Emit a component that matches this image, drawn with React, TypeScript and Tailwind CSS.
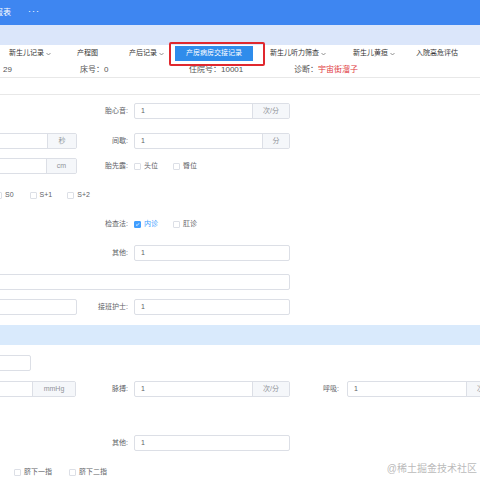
import React from 'react';

const FONT = "font-['Liberation_Sans','Noto_Sans_CJK_SC',sans-serif]";

function Chevron() {
  return (
    <svg width="5" height="4" viewBox="0 0 5 4" className="ml-[2px]">
      <path d="M0.5 1 L2.5 3 L4.5 1" fill="none" stroke="#666" strokeWidth="0.7" />
    </svg>
  );
}

function Box({ checked = false }: { checked?: boolean }) {
  return (
    <span
      className={`w-[7px] h-[7px] shrink-0 rounded-[1px] border flex items-center justify-center ${
        checked ? 'bg-[#409eff] border-[#409eff]' : 'bg-white border-[#dcdfe6]'
      }`}
    >
      {checked && (
        <svg width="5" height="5" viewBox="0 0 5 5">
          <path d="M1 2.6 L2.1 3.6 L4 1.3" fill="none" stroke="#fff" strokeWidth="0.8" />
        </svg>
      )}
    </span>
  );
}

function Option({ text, checked = false, gap = 'mr-[15px]' }: { text: string; checked?: boolean; gap?: string }) {
  return (
    <span className={`flex items-center gap-[3px] ${gap}`}>
      <Box checked={checked} />
      <span className={`text-[7px] ${checked ? 'text-[#409eff]' : 'text-[#606266]'}`}>{text}</span>
    </span>
  );
}

function Field({
  value = '',
  addon,
  addonW = '',
  className = '',
}: {
  value?: string;
  addon?: string;
  addonW?: string;
  className?: string;
}) {
  return (
    <div className={`h-[16px] flex border border-[#dcdfe6] rounded-[2px] bg-white overflow-hidden ${className}`}>
      <div className="flex-1 flex items-center pl-[6px] text-[7px] text-[#606266]">{value}</div>
      {addon && (
        <div
          className={`${addonW} bg-[#f5f7fa] border-l border-[#dcdfe6] flex items-center justify-center text-[7px] text-[#909399]`}
        >
          {addon}
        </div>
      )}
    </div>
  );
}

function Label2({ text }: { text: string }) {
  return <div className="w-[50px] text-right text-[7px] text-[#606266] mr-[6px]">{text}</div>;
}

function Label3({ text }: { text: string }) {
  return <div className="w-[49px] text-right text-[7px] text-[#606266] mr-[8px]">{text}</div>;
}

const tabs = [
  { label: '新生儿记录', w: 'w-[68px]', chev: true },
  { label: '产程图', w: 'w-[52px]', chev: false },
  { label: '产后记录', w: 'w-[46px]', chev: true },
];

const tabsRight = [
  { label: '新生儿听力筛查', w: 'w-[83px]', chev: true },
  { label: '新生儿黄疸', w: 'w-[63px]', chev: true },
  { label: '入院高危评估', w: 'w-[60px]', chev: false },
];

export default function App() {
  return (
    <div className={`relative w-[480px] h-[480px] overflow-hidden bg-white ${FONT}`}>
      {/* top bar */}
      <div className="h-[25px] bg-[#3e86f1] flex items-center text-white text-[8px]">
        <span className="-ml-[5px]">报表</span>
        <span className="ml-[17px] tracking-[1px] text-[9px] leading-none -mt-[3px]">···</span>
      </div>
      <div className="h-[20px] bg-[#dbe6fa]" />

      {/* tabs */}
      <div className="h-[17px] flex items-center pl-[9px] text-[7px] text-[#333]">
        {tabs.map((t) => (
          <span key={t.label} className={`${t.w} flex items-center`}>
            {t.label}
            {t.chev && <Chevron />}
          </span>
        ))}
        <span className="w-[78px] h-[15px] bg-[#2f8ceb] text-white flex items-center justify-center">
          产房病房交接记录
        </span>
        <span className="w-[17px]" />
        {tabsRight.map((t) => (
          <span key={t.label} className={`${t.w} flex items-center`}>
            {t.label}
            {t.chev && <Chevron />}
          </span>
        ))}
      </div>

      {/* info row */}
      <div className="h-[16px] flex items-center text-[8px] text-[#555] border-b border-[#e8e8e8]">
        <span className="w-[80px] pl-[3px]">29</span>
        <span className="w-[109px]">床号：0</span>
        <span className="w-[105px]">住院号：10001</span>
        <span>
          诊断：<span className="text-[#e0393e]">宇宙街溜子</span>
        </span>
      </div>
      <div className="h-[17px] border-b border-[#e8e8e8]" />

      {/* form */}
      <div className="-ml-[122px] w-[720px]">
        <div className="h-[32px] flex items-center">
          <div className="w-[200px]" />
          <Label2 text="胎心音:" />
          <Field value="1" addon="次/分" addonW="w-[37px]" className="w-[156px]" />
        </div>
        <div className="h-[28px] flex items-center">
          <div className="w-[200px] flex justify-end pr-[1px]">
            <Field addon="秒" addonW="w-[29px]" className="w-[150px]" />
          </div>
          <Label2 text="间歇:" />
          <Field value="1" addon="分" addonW="w-[27px]" className="w-[156px]" />
        </div>
        <div className="h-[22px] flex items-center">
          <div className="w-[200px] flex justify-end pr-[1px]">
            <Field addon="cm" addonW="w-[30px]" className="w-[150px]" />
          </div>
          <Label2 text="胎先露:" />
          <Option text="头位" />
          <Option text="臀位" />
        </div>
        <div className="h-[36px] flex items-center pl-[117px]">
          <Option text="S0" gap="mr-[16px]" />
          <Option text="S+1" gap="mr-[15px]" />
          <Option text="S+2" />
        </div>
        <div className="h-[22px] flex items-center">
          <div className="w-[200px]" />
          <Label2 text="检查法:" />
          <Option text="内诊" checked />
          <Option text="肛诊" />
        </div>
        <div className="h-[36px] flex items-center">
          <div className="w-[200px]" />
          <Label2 text="其他:" />
          <Field value="1" className="w-[156px]" />
        </div>
        <div className="h-[22px] flex items-center">
          <Field className="w-[412px]" />
        </div>
        <div className="h-[28px] flex items-center">
          <div className="w-[200px] flex justify-end pr-[1px]">
            <Field className="w-[150px]" />
          </div>
          <Label2 text="接班护士:" />
          <Field value="1" className="w-[156px]" />
        </div>
      </div>

      <div className="mt-[4px] h-[20px] bg-[#d9eafc]" />

      <div className="-ml-[122px] w-[720px]">
        <div className="h-[36px] flex items-center">
          <Field className="w-[153px]" />
        </div>
        <div className="h-[16px] flex items-center">
          <div className="w-[200px] flex justify-end pr-[2px]">
            <Field addon="mmHg" addonW="w-[43px]" className="w-[150px]" />
          </div>
          <Label2 text="脉搏:" />
          <Field value="1" addon="次/分" addonW="w-[37px]" className="w-[156px]" />
          <Label3 text="呼吸:" />
          <Field value="1" addon="次/分" addonW="w-[37px]" className="w-[157px]" />
        </div>
        <div className="mt-[38px] h-[16px] flex items-center">
          <div className="w-[200px]" />
          <Label2 text="其他:" />
          <Field value="1" className="w-[156px]" />
        </div>
        <div className="mt-[12px] h-[18px] flex items-center pl-[108px]">
          <span className="text-[7px] text-[#606266] mr-[14px]">脐平</span>
          <Option text="脐下一指" gap="mr-[17px]" />
          <Option text="脐下二指" />
        </div>
      </div>

      {/* annotation box */}
      <div className="absolute left-[169px] top-[42px] w-[96px] h-[24px] border-2 border-[#e0282e] rounded-[2px]" />

      {/* watermark */}
      <div className="absolute right-[3px] bottom-[4px] text-[10px] text-[#a8a8a8]/80">@稀土掘金技术社区</div>
    </div>
  );
}
